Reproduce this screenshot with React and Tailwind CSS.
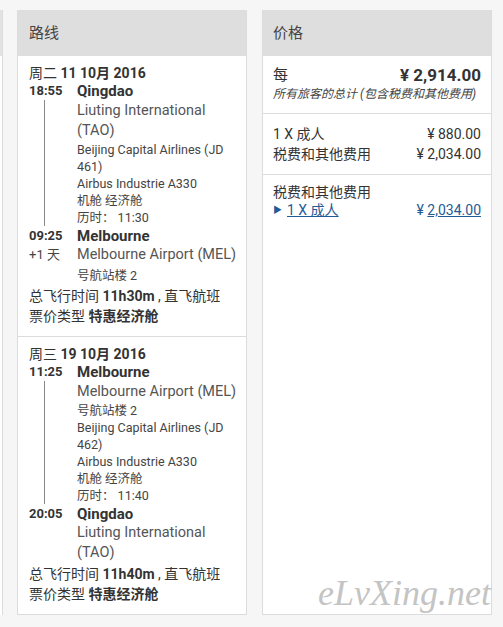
import React from 'react'

const Seg = ({ date, depTime, depCity, depLines, midLines, arrTime, arrExtra, arrCity, arrLines, total, last }) => (
  <div className={`shrink-0 pl-[11px] pr-[6px] pt-[8px] pb-[10px] ${last ? '' : 'border-b border-[#dcdcdc]'}`}>
    <div className="text-[14px] leading-[18px] text-[#333]">
      {date[0]} <span className="font-bold">{date[1]}</span>
    </div>
    <div className="flex leading-[18px]">
      <div className="w-[48px] text-[13px] font-bold text-[#333]">{depTime}</div>
      <div className="text-[15px] font-bold text-[#333]">{depCity}</div>
    </div>
    <div className="flex">
      <div className="w-[48px] shrink-0">
        <div className="ml-[15px] h-full border-l border-[#888]" />
      </div>
      <div className="min-w-0 flex-1 pt-[1px]">
        {depLines}
        {midLines.map((t, i) => (
          <div key={i} className="text-[12.5px] leading-[17px] text-[#444]">{t}</div>
        ))}
      </div>
    </div>
    <div className="mt-[1px] flex leading-[18px]">
      <div className="w-[48px] text-[13px] font-bold text-[#333]">{arrTime}</div>
      <div className="text-[15px] font-bold text-[#333]">{arrCity}</div>
    </div>
    <div className="flex">
      <div className="w-[48px] shrink-0 text-[13px] leading-[20px] text-[#444]">{arrExtra}</div>
      <div className="min-w-0 flex-1">{arrLines}</div>
    </div>
    <div className={`${last ? 'mt-[1px]' : ''} text-[14px] leading-[20px] text-[#333]`}>
      总飞行时间 <span className="font-bold">{total}</span> , 直飞航班
    </div>
    <div className="text-[14px] leading-[20px] text-[#333]">
      票价类型 <span className="font-bold">特惠经济舱</span>
    </div>
  </div>
)

const Airport = ({ children }) => (
  <div className="text-[14.5px] leading-[20px] text-[#555]">{children}</div>
)

const Small = ({ children, lh = 'leading-[17px]' }) => (
  <div className={`text-[12.5px] ${lh} text-[#444]`}>{children}</div>
)

export default function App() {
  return (
    <div
      className="min-h-[627px] bg-[#f6f6f6] pt-[10px] flex items-start"
      style={{ fontFamily: 'Roboto, "Noto Sans CJK SC", sans-serif' }}
    >
      {/* sliver of the panel cut off at the left */}
      <div className="w-[3px] h-[605px] border-r border-[#dcdcdc] bg-white flex flex-col">
        <div className="h-[46px] shrink-0 bg-[#e2e2e2]" />
      </div>

      {/* route panel */}
      <div className="ml-[14px] w-[230px] h-[605px] bg-white border border-[#dcdcdc] border-t-0 flex flex-col overflow-hidden">
        <div className="h-[46px] shrink-0 bg-[#dedede] px-[11px] flex items-center text-[15px] text-[#444]">路线</div>
        <Seg
          date={['周二', '11 10月 2016']}
          depTime="18:55"
          depCity="Qingdao"
          depLines={<Airport>Liuting International (TAO)</Airport>}
          midLines={['Beijing Capital Airlines (JD 461)', 'Airbus Industrie A330', '机舱 经济舱', '历时：  11:30']}
          arrTime="09:25"
          arrCity="Melbourne"
          arrExtra="+1 天"
          arrLines={
            <>
              <Airport>Melbourne Airport (MEL)</Airport>
              <Small lh="leading-[21px]">号航站楼 2</Small>
            </>
          }
          total="11h30m"
        />
        <Seg
          last
          date={['周三', '19 10月 2016']}
          depTime="11:25"
          depCity="Melbourne"
          depLines={
            <>
              <Airport>Melbourne Airport (MEL)</Airport>
              <Small>号航站楼 2</Small>
            </>
          }
          midLines={['Beijing Capital Airlines (JD 462)', 'Airbus Industrie A330', '机舱 经济舱', '历时：  11:40']}
          arrTime="20:05"
          arrCity="Qingdao"
          arrExtra=""
          arrLines={<Airport>Liuting International (TAO)</Airport>}
          total="11h40m"
        />
      </div>

      {/* price panel */}
      <div className="relative ml-[15px] w-[230px] h-[605px] bg-white border border-[#dcdcdc] border-t-0">
        <div className="h-[46px] bg-[#dedede] px-[10px] flex items-center text-[15px] text-[#444]">价格</div>
        <div className="px-[10px] pt-[9px] pb-[10px] border-b border-[#dcdcdc]">
          <div className="flex justify-between items-center leading-[20px]">
            <span className="text-[15px] text-[#333]">每</span>
            <span className="text-[17px] font-bold text-[#333]">¥ 2,914.00</span>
          </div>
          <div className="text-[12px] leading-[18px] italic text-[#444]">所有旅客的总计 (包含税费和其他费用)</div>
        </div>
        <div className="px-[10px] pt-[10px] pb-[10px] border-b border-[#dcdcdc] text-[14px] text-[#333]">
          <div className="flex justify-between leading-[20px]">
            <span>1 X 成人</span>
            <span>¥ 880.00</span>
          </div>
          <div className="flex justify-between leading-[20px]">
            <span>税费和其他费用</span>
            <span>¥ 2,034.00</span>
          </div>
        </div>
        <div className="px-[10px] pt-[8px] text-[14px] text-[#333]">
          <div className="leading-[18px]">税费和其他费用</div>
          <div className="flex justify-between items-center leading-[18px] text-[#1f5b96]">
            <span className="flex items-center">
              <span className="text-[9px] mr-[5px]">▶</span>
              <span className="underline">1 X 成人</span>
            </span>
            <span>
              ¥ <span className="underline">2,034.00</span>
            </span>
          </div>
        </div>
        <div
          className="absolute right-[0px] bottom-[-6px] text-[36px] italic text-[#c4c4c4]"
          style={{ fontFamily: '"Liberation Serif", serif' }}
        >
          eLvXing.net
        </div>
      </div>
    </div>
  )
}
